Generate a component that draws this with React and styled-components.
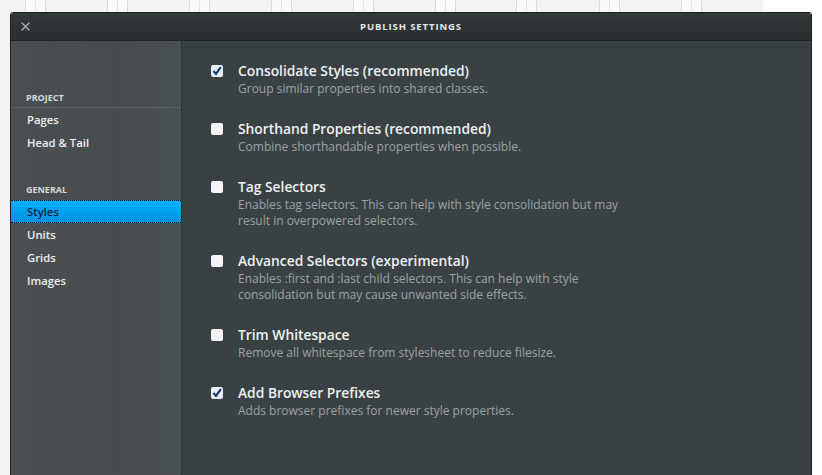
import styled, { createGlobalStyle } from "styled-components";

const GlobalStyle = createGlobalStyle`
    html, body {
        margin: 0;
        padding: 0;
        background: #ffffff;
        font-family: "Open Sans", "Liberation Sans", sans-serif;
        overflow: hidden;
    }
`;

const Page = styled.div`
    position: relative;
    width: 822px;
    height: 475px;
    overflow: hidden;
`;

const Backdrop = styled.div`
    display: flex;
    height: 100%;
    width: 760px;
`;

const Column = styled.div`
    background: #f3f3f3;
    width: ${(props) => props.$w}px;
    flex: none;
`;

const Gutter = styled.div`
    width: 19px;
    flex: none;
    background: #fafafa;
    border-left: 1px solid #dcdcdc;
    border-right: 1px solid #dcdcdc;
    display: flex;
    justify-content: center;

    &::after {
        content: "";
        border-left: 1px dotted #d0d0d0;
    }
`;

const Modal = styled.div`
    position: absolute;
    left: 10px;
    top: 12px;
    width: 800px;
    height: 470px;
    display: flex;
    flex-direction: column;
    border: 1px solid #1d2123;
    border-radius: 3px 3px 0 0;
    overflow: hidden;
`;

const Header = styled.div`
    height: 27px;
    flex: none;
    display: flex;
    align-items: center;
    justify-content: center;
    position: relative;
    background: linear-gradient(#33393b, #2a2f31);
    border-bottom: 1px solid #1e2224;
`;

const Close = styled.span`
    position: absolute;
    left: 9px;
    top: 8px;
    width: 11px;
    height: 11px;
    display: flex;
`;

const Title = styled.div`
    color: #e4e7e8;
    font-size: 9.5px;
    font-weight: 700;
    letter-spacing: 0.9px;
`;

const Body = styled.div`
    flex: 1;
    display: flex;
`;

const Sidebar = styled.div`
    width: 170px;
    flex: none;
    background: linear-gradient(90deg, #4a5052, #474c4e 60%, #4a5153);
    border-right: 1px solid #2e3436;
    padding-top: 46px;
`;

const SectionHead = styled.div`
    box-sizing: border-box;
    height: 21px;
    line-height: 21px;
    padding-left: 15px;
    font-size: 9px;
    font-weight: 700;
    color: #d6dadb;
    margin-top: ${(props) => props.$gap || 0}px;
    border-bottom: 1px solid ${(props) => (props.$line ? "#5a6163" : "transparent")};
`;

const NavItem = styled.div`
    box-sizing: border-box;
    height: 23px;
    line-height: 21px;
    padding-left: 16px;
    font-size: 11.3px;
    font-weight: 600;
    color: ${(props) => (props.$active ? "#10273a" : "#eef0f1")};
    background: ${(props) => (props.$active ? "linear-gradient(#00b2fa, #0090de)" : "transparent")};
    border-top: 1px dotted ${(props) => (props.$active ? "#111" : "transparent")};
    border-bottom: 1px dotted ${(props) => (props.$active ? "#111" : "transparent")};
`;

const Content = styled.div`
    flex: 1;
    background: #394144;
    padding: 20px 0 0 29px;
    display: flex;
    flex-direction: column;
    gap: 22px;
`;

const Option = styled.div`
    display: flex;
    gap: 15px;
`;

const Box = styled.span`
    width: 12px;
    height: 12px;
    margin-top: 4px;
    flex: none;
    border-radius: 2px;
    background: ${(props) => (props.$on ? "#e6eefa" : "#f4f4f4")};
    display: flex;
    align-items: center;
    justify-content: center;
`;

const Text = styled.div`
    width: 386px;
`;

const OptTitle = styled.div`
    font-size: 13.8px;
    font-weight: 600;
    line-height: 20px;
    color: #eef1f2;
`;

const OptDesc = styled.div`
    font-size: 12px;
    line-height: 16px;
    color: #9ca3a5;
`;

const options = [
    { t: "Consolidate Styles (recommended)", d: "Group similar properties into shared classes.", on: true },
    { t: "Shorthand Properties (recommended)", d: "Combine shorthandable properties when possible." },
    { t: "Tag Selectors", d: "Enables tag selectors. This can help with style consolidation but may result in overpowered selectors." },
    { t: "Advanced Selectors (experimental)", d: "Enables :first and :last child selectors. This can help with style consolidation but may cause unwanted side effects." },
    { t: "Trim Whitespace", d: "Remove all whitespace from stylesheet to reduce filesize." },
    { t: "Add Browser Prefixes", d: "Adds browser prefixes for newer style properties.", on: true },
];

const cols = [25, 61, 61, 61, 61, 61, 60, 62, 61, 61];

const App = () => {
    return (
        <Page>
            <GlobalStyle />
            <Backdrop>
                {cols.map((w, i) => (
                    <div key={i} style={{ display: "flex" }}>
                        <Column $w={w} />
                        {i < cols.length - 1 && <Gutter />}
                    </div>
                ))}
            </Backdrop>
            <Modal>
                <Header>
                    <Close>
                        <svg width="11" height="11" viewBox="0 0 11 11">
                            <path d="M1.5 1.5 L9.5 9.5 M9.5 1.5 L1.5 9.5" stroke="#a9afb1" strokeWidth="1.4" />
                        </svg>
                    </Close>
                    <Title>PUBLISH SETTINGS</Title>
                </Header>
                <Body>
                    <Sidebar>
                        <SectionHead $line>PROJECT</SectionHead>
                        <NavItem>Pages</NavItem>
                        <NavItem>Head &amp; Tail</NavItem>
                        <SectionHead $gap={25}>GENERAL</SectionHead>
                        <NavItem $active>Styles</NavItem>
                        <NavItem>Units</NavItem>
                        <NavItem>Grids</NavItem>
                        <NavItem>Images</NavItem>
                    </Sidebar>
                    <Content>
                        {options.map((o) => (
                            <Option key={o.t}>
                                <Box $on={o.on}>
                                    {o.on && (
                                        <svg width="10" height="10" viewBox="0 0 10 10">
                                            <path d="M1.5 5 L4 7.8 L8.8 1.2" fill="none" stroke="#16306e" strokeWidth="2" />
                                        </svg>
                                    )}
                                </Box>
                                <Text>
                                    <OptTitle>{o.t}</OptTitle>
                                    <OptDesc>{o.d}</OptDesc>
                                </Text>
                            </Option>
                        ))}
                    </Content>
                </Body>
            </Modal>
        </Page>
    );
};

export default App;
